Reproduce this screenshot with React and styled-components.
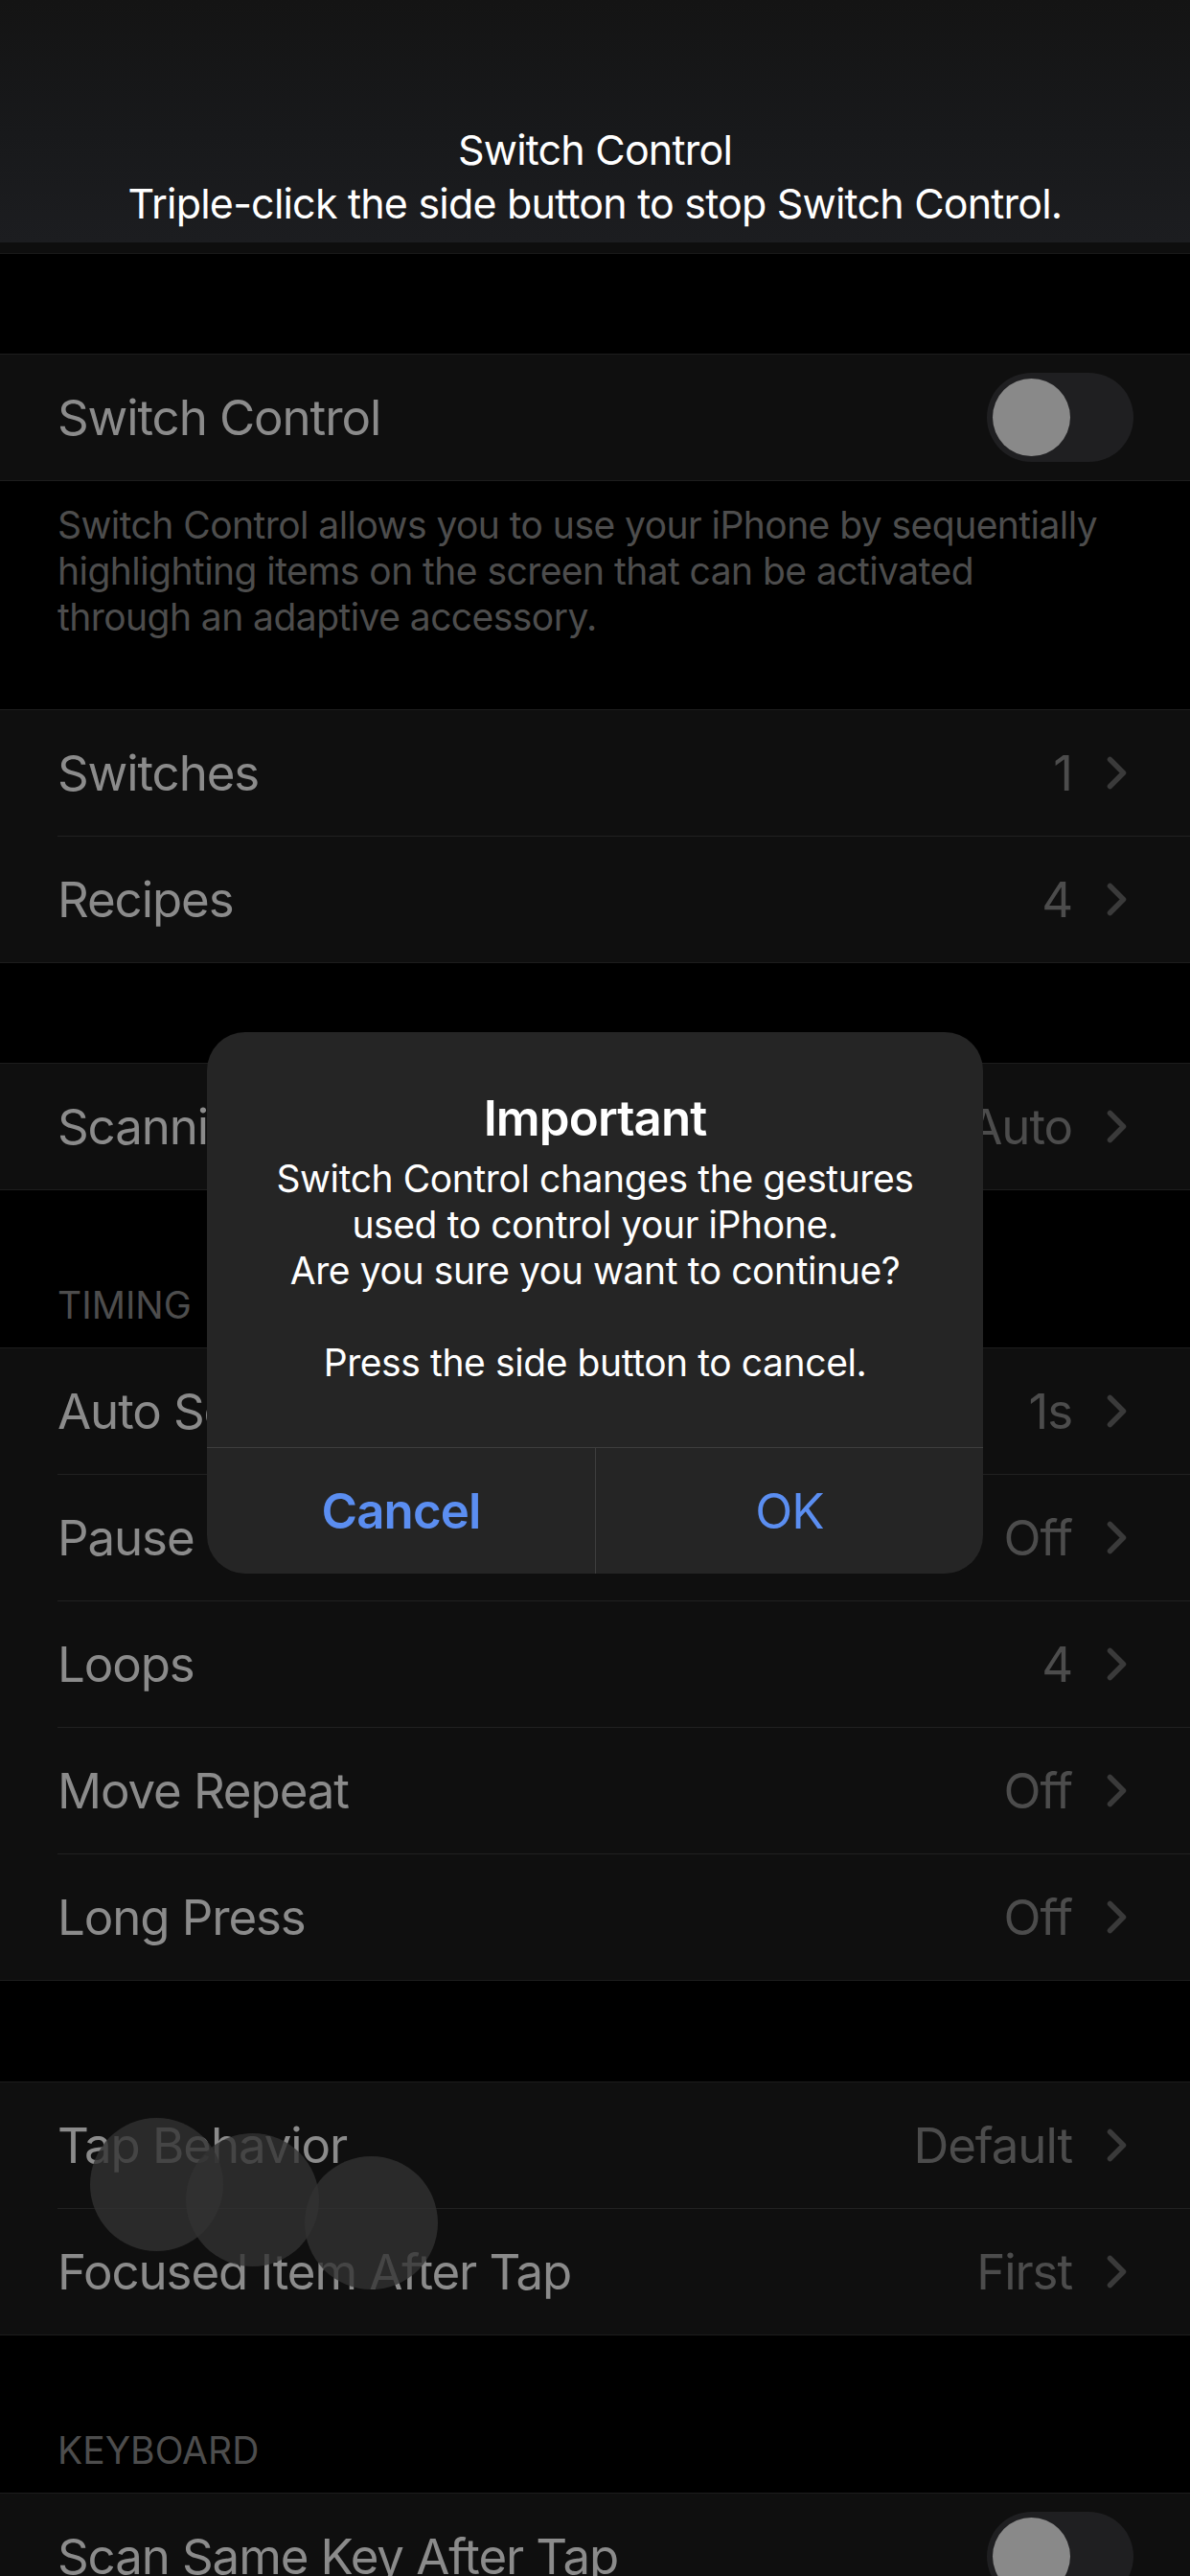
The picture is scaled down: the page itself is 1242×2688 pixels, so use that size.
import React from 'react';
import styled, { createGlobalStyle } from 'styled-components';

const GlobalStyle = createGlobalStyle`
  html, body { margin: 0; padding: 0; background: #000; }
  body {
    font-family: Inter, "Noto Sans", Roboto, sans-serif;
    -webkit-font-smoothing: antialiased;
  }
`;

const Page = styled.div`
  position: relative;
  width: 1242px;
  height: 2688px;
  overflow: hidden;
  background: #000;
`;

const Banner = styled.header`
  height: 253px;
  box-sizing: border-box;
  padding-bottom: 13px;
  display: flex;
  flex-direction: column;
  justify-content: flex-end;
  align-items: center;
  background: linear-gradient(180deg, #141414 0%, #18191b 55%, #1c1d20 100%);
  color: #fff;
  font-size: 43px;
  line-height: 56px;
  letter-spacing: -0.8px;
`;

const BannerLine = styled.div``;

const NavRemnant = styled.div`
  height: 11px;
  background: #0e0e0e;
  border-bottom: 1px solid #1a1a1a;
`;

const Spacer = styled.div`
  height: ${(p) => p.$h}px;
`;

const Group = styled.section`
  background: #0f0f0f;
  border-top: 1px solid #1d1d1d;
  border-bottom: 1px solid #1d1d1d;
`;

const Row = styled.div`
  padding-left: 60px;
  display: flex;
`;

const RowInner = styled.div`
  flex: 1;
  height: 131px;
  display: flex;
  align-items: center;
  padding-right: ${(p) => (p.$toggle ? '59px' : '66px')};
  border-bottom: ${(p) => (p.$last ? 'none' : '1px solid #212121')};
`;

const Label = styled.span`
  flex: 1;
  font-size: 51px;
  color: #8b8b8b;
  letter-spacing: -1.1px;
  white-space: nowrap;
`;

const Value = styled.span`
  font-size: 51px;
  color: #4c4c4c;
  letter-spacing: -1.1px;
  margin-right: 36px;
`;

const Chevron = () => (
  <svg width="21" height="35" viewBox="0 0 21 35" fill="none">
    <path
      d="M3.5 3.5 L17.5 17.5 L3.5 31.5"
      stroke="#3a3a3a"
      strokeWidth="5.5"
      strokeLinecap="round"
      strokeLinejoin="round"
    />
  </svg>
);

const Track = styled.span`
  width: 153px;
  height: 93px;
  box-sizing: border-box;
  border-radius: 47px;
  background: #1f1f21;
  display: flex;
  align-items: center;
  padding: 0 6px;
`;

const Knob = styled.span`
  width: 81px;
  height: 81px;
  border-radius: 50%;
  background: #898989;
`;

const Toggle = () => (
  <Track>
    <Knob />
  </Track>
);

const Footer = styled.p`
  margin: 0;
  padding: 22px 60px 72px;
  font-size: 39px;
  line-height: 48px;
  color: #4d4d4d;
  letter-spacing: -0.55px;
`;

const Header = styled.h3`
  margin: 0;
  padding: 96px 60px 20px;
  font-size: 39px;
  line-height: 48px;
  font-weight: 400;
  color: #4d4d4d;
`;

const Alert = styled.div`
  position: absolute;
  top: 1077px;
  left: 216px;
  width: 810px;
  border-radius: 40px;
  background: #252525;
  overflow: hidden;
  color: #fff;
  text-align: center;
`;

const AlertBody = styled.div`
  padding: 57px 40px 64px;
`;

const AlertTitle = styled.div`
  font-size: 51px;
  line-height: 66px;
  font-weight: 600;
  letter-spacing: -0.9px;
`;

const AlertMessage = styled.div`
  margin-top: 6px;
  font-size: 39px;
  line-height: 48px;
  letter-spacing: -0.4px;
`;

const AlertActions = styled.div`
  display: grid;
  grid-template-columns: 1fr 1fr;
  border-top: 1px solid #3e3e3e;
`;

const AlertButton = styled.div`
  height: 131px;
  display: flex;
  align-items: center;
  justify-content: center;
  font-size: 51px;
  color: #5b8ef1;
  font-weight: ${(p) => (p.$bold ? 600 : 400)};
  letter-spacing: -0.9px;
  & + & {
    border-left: 1px solid #3e3e3e;
  }
`;

const TouchDot = styled.div`
  position: absolute;
  width: 139px;
  height: 139px;
  border-radius: 50%;
  background: rgba(50, 50, 50, 0.78);
  left: ${(p) => p.$x - 69.5}px;
  top: ${(p) => p.$y - 69.5}px;
`;

const NavRow = ({ label, value, last }) => (
  <Row>
    <RowInner $last={last}>
      <Label>{label}</Label>
      <Value>{value}</Value>
      <Chevron />
    </RowInner>
  </Row>
);

const ToggleRow = ({ label, last }) => (
  <Row>
    <RowInner $last={last} $toggle>
      <Label>{label}</Label>
      <Toggle />
    </RowInner>
  </Row>
);

export default function App() {
  return (
    <Page>
      <GlobalStyle />
      <Banner>
        <BannerLine>Switch Control</BannerLine>
        <BannerLine>Triple-click the side button to stop Switch Control.</BannerLine>
      </Banner>
      <NavRemnant />
      <Spacer $h={104} />
      <Group>
        <ToggleRow label="Switch Control" last />
      </Group>
      <Footer>
        Switch Control allows you to use your iPhone by sequentially
        <br />
        highlighting items on the screen that can be activated
        <br />
        through an adaptive accessory.
      </Footer>
      <Group>
        <NavRow label="Switches" value="1" />
        <NavRow label="Recipes" value="4" last />
      </Group>
      <Spacer $h={104} />
      <Group>
        <NavRow label="Scanning Style" value="Auto" last />
      </Group>
      <Header>TIMING</Header>
      <Group>
        <NavRow label="Auto Scanning Time" value="1s" />
        <NavRow label="Pause on First Item" value="Off" />
        <NavRow label="Loops" value="4" />
        <NavRow label="Move Repeat" value="Off" />
        <NavRow label="Long Press" value="Off" last />
      </Group>
      <Spacer $h={105} />
      <Group>
        <NavRow label="Tap Behavior" value="Default" />
        <NavRow label="Focused Item After Tap" value="First" last />
      </Group>
      <Header>KEYBOARD</Header>
      <Group>
        <ToggleRow label="Scan Same Key After Tap" last />
      </Group>

      <TouchDot $x={163} $y={2279} />
      <TouchDot $x={263} $y={2295} />
      <TouchDot $x={387} $y={2319} />

      <Alert>
        <AlertBody>
          <AlertTitle>Important</AlertTitle>
          <AlertMessage>
            Switch Control changes the gestures
            <br />
            used to control your iPhone.
            <br />
            Are you sure you want to continue?
            <br />
            <br />
            Press the side button to cancel.
          </AlertMessage>
        </AlertBody>
        <AlertActions>
          <AlertButton $bold>Cancel</AlertButton>
          <AlertButton>OK</AlertButton>
        </AlertActions>
      </Alert>
    </Page>
  );
}
